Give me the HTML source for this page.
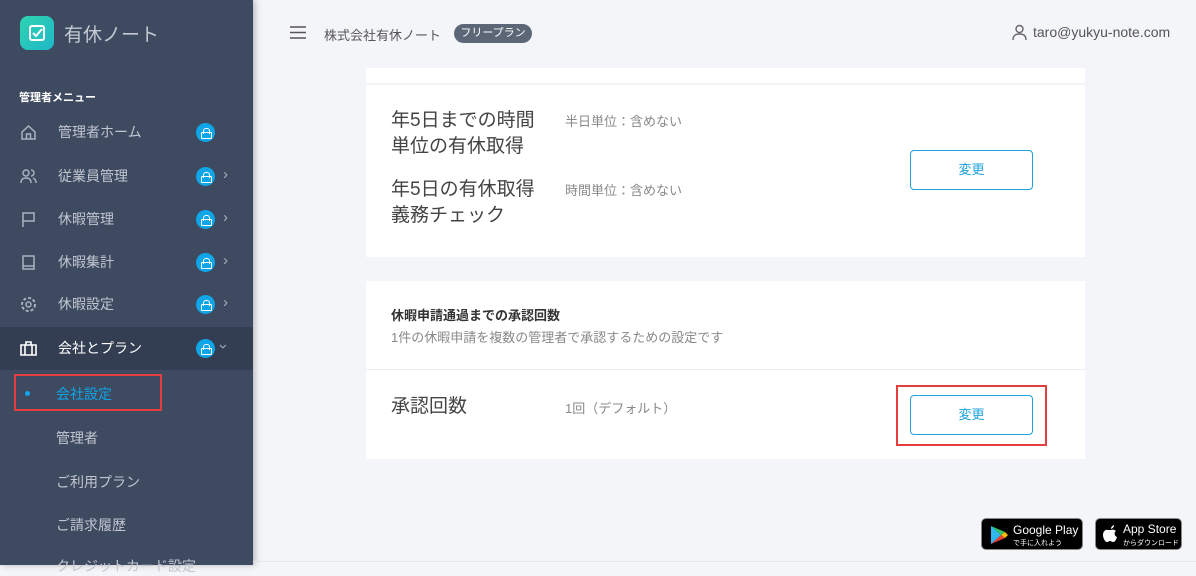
<!DOCTYPE html>
<html><head><meta charset="utf-8"><style>
*{margin:0;padding:0;box-sizing:border-box}
body{width:1196px;height:565px;overflow:hidden;background:#f4f5f8;font-family:"Liberation Sans","Noto Sans CJK JP",sans-serif;position:relative}
.sb{position:absolute;left:0;top:0;width:253px;height:565px;background:#3e4a60;box-shadow:2px 0 6px rgba(0,0,0,.25)}
.logo{position:absolute;left:20px;top:16px;width:34px;height:34px;border-radius:8px;background:linear-gradient(135deg,#2fd3b0,#1fb8c8)}
.lt{position:absolute;left:64px;top:20px;font-size:19px;color:#c3c9d3}
.sec{position:absolute;left:19px;top:89px;font-size:11px;color:#fff;font-weight:bold}
.it{position:absolute;left:0;width:253px;height:42px;color:#c0c6d0;font-size:14px}
.it .ic{position:absolute;left:20px;top:13px;width:17px;height:17px}
.it .tx{position:absolute;left:58px;top:11px}
.lk{position:absolute;left:196px;top:12px;width:19px;height:19px;border-radius:50%;background:#0ea5e9}
.lk:after{content:"";position:absolute;left:5px;top:9px;width:9px;height:5px;border:1.5px solid #fff;border-radius:1px}
.lk:before{content:"";position:absolute;left:7px;top:5px;width:5px;height:5px;border:1.5px solid #fff;border-bottom:none;border-radius:3px 3px 0 0}
.ch{position:absolute;left:223px;top:11px;color:#aab2bf;font-size:15px}
.sub{position:absolute;left:56px;font-size:14px;color:#c0c6d0}
.card{position:absolute;left:366px;width:719px;background:#fff}
.btn{position:absolute;left:910px;width:123px;height:40px;border:1px solid #1ea3dd;border-radius:4px;color:#1ea3dd;font-size:13px;text-align:center;line-height:38px;background:#fff}
.big{position:absolute;font-size:19px;color:#444;line-height:26px}
.sm{position:absolute;font-size:13px;color:#888}
</style></head><body>
<div class="sb">
<div class="logo"><svg width="34" height="34"><rect x="10" y="10" width="14" height="14" rx="2" fill="none" stroke="#fff" stroke-width="2"/><path d="M13 17l3 3 6-7" fill="none" stroke="#fff" stroke-width="2"/></svg></div>
<div class="lt">有休ノート</div>
<div class="sec">管理者メニュー</div>
<div class="it" style="top:111px"><svg class="ic" viewBox="0 0 17 17"><path d="M2 8L8.5 2 15 8V15H2Z M6.5 15V10h4v5" fill="none" stroke="#aab2bf" stroke-width="1.5"/></svg><span class="tx">管理者ホーム</span><span class="lk"></span></div>
<div class="it" style="top:155px"><svg class="ic" viewBox="0 0 17 17"><circle cx="6" cy="5" r="3" fill="none" stroke="#aab2bf" stroke-width="1.5"/><path d="M1 15c0-4 2-5 5-5s5 1 5 5M11 2a3 3 0 010 6M13 10c2 1 3 2 3 5" fill="none" stroke="#aab2bf" stroke-width="1.5"/></svg><span class="tx">従業員管理</span><span class="lk"></span><span class="ch">›</span></div>
<div class="it" style="top:198px"><svg class="ic" viewBox="0 0 17 17"><path d="M3 16V2h11v8H3" fill="none" stroke="#aab2bf" stroke-width="1.5"/></svg><span class="tx">休暇管理</span><span class="lk"></span><span class="ch">›</span></div>
<div class="it" style="top:241px"><svg class="ic" viewBox="0 0 17 17"><path d="M3 2h11v13H3zM3 12h11" fill="none" stroke="#aab2bf" stroke-width="1.5"/></svg><span class="tx">休暇集計</span><span class="lk"></span><span class="ch">›</span></div>
<div class="it" style="top:283px"><svg class="ic" viewBox="0 0 17 17"><circle cx="8.5" cy="8.5" r="2.5" fill="none" stroke="#aab2bf" stroke-width="1.5"/><circle cx="8.5" cy="8.5" r="6.5" fill="none" stroke="#aab2bf" stroke-width="2" stroke-dasharray="3 2"/></svg><span class="tx">休暇設定</span><span class="lk"></span><span class="ch">›</span></div>
<div class="it" style="top:327px;background:#333e52;height:43px;color:#fff"><svg class="ic" viewBox="0 0 17 17"><path d="M1 5h15v10H1zM6 5V2h5v3M5 5v10M12 5v10" fill="none" stroke="#fff" stroke-width="1.6"/></svg><span class="tx">会社とプラン</span><span class="lk"></span><span class="ch" style="transform:rotate(90deg);left:221px">›</span></div>
<div style="position:absolute;left:14px;top:374px;width:148px;height:37px;border:2px solid #e53e3e"></div>
<div style="position:absolute;left:25px;top:391px;width:5px;height:5px;border-radius:50%;background:#0ea5e9"></div>
<div class="sub" style="top:384px;color:#0ea5e9">会社設定</div>
<div class="sub" style="top:428px">管理者</div>
<div class="sub" style="top:472px">ご利用プラン</div>
<div class="sub" style="top:515px">ご請求履歴</div>
<div class="sub" style="top:556px">クレジットカード設定</div>
</div>
<svg style="position:absolute;left:290px;top:26px" width="16" height="13"><path d="M0 1h16M0 6.5h16M0 12h16" stroke="#555" stroke-width="1.6"/></svg>
<div style="position:absolute;left:324px;top:25px;font-size:13px;color:#555">株式会社有休ノート</div>
<div style="position:absolute;left:454px;top:24px;width:78px;height:19px;border-radius:10px;background:#5b6676;color:#fff;font-size:11px;text-align:center;line-height:19px">フリープラン</div>
<svg style="position:absolute;left:1012px;top:24px" width="15" height="16"><circle cx="7.5" cy="5" r="3.5" fill="none" stroke="#666" stroke-width="1.4"/><path d="M1 16c0-5 3-6 6.5-6s6.5 1 6.5 6" fill="none" stroke="#666" stroke-width="1.4"/></svg>
<div style="position:absolute;left:1033px;top:24px;font-size:14px;color:#555">taro@yukyu-note.com</div>
<div class="card" style="top:68px;height:15px"></div>
<div class="card" style="top:85px;height:172px"></div>
<div class="big" style="left:391px;top:108px">年5日までの時間<br>単位の有休取得</div>
<div class="sm" style="left:565px;top:111px">半日単位：含めない</div>
<div class="big" style="left:391px;top:177px">年5日の有休取得<br>義務チェック</div>
<div class="sm" style="left:565px;top:180px">時間単位：含めない</div>
<div class="btn" style="top:150px">変更</div>
<div class="card" style="top:281px;height:178px"></div>
<div style="position:absolute;left:366px;top:369px;width:719px;height:1px;background:#ebedf0"></div>
<div style="position:absolute;left:391px;top:305px;font-size:13px;color:#333;font-weight:bold">休暇申請通過までの承認回数</div>
<div class="sm" style="left:391px;top:327px;color:#888">1件の休暇申請を複数の管理者で承認するための設定です</div>
<div class="big" style="left:391px;top:394px">承認回数</div>
<div class="sm" style="left:565px;top:398px">1回（デフォルト）</div>
<div class="btn" style="top:395px">変更</div>
<div style="position:absolute;left:896px;top:385px;width:151px;height:61px;border:2px solid #e53e3e"></div>
<div style="position:absolute;left:981px;top:518px;width:102px;height:32px;background:#000;border-radius:5px;border:1px solid #888">
<svg style="position:absolute;left:8px;top:6px" width="18" height="20"><path d="M1 1l10 9-10 9z" fill="#2fb7f0"/><path d="M1 1l10 9 4-3z" fill="#34c26b"/><path d="M1 19l10-9 4 3z" fill="#ea4335"/><path d="M11 10l4-3 3 3-3 3z" fill="#fbbc05"/></svg>
<div style="position:absolute;left:31px;top:4px;color:#fff;font-size:12px">Google Play</div>
<div style="position:absolute;left:31px;top:19px;color:#fff;font-size:7px">で手に入れよう</div></div>
<div style="position:absolute;left:1095px;top:518px;width:87px;height:32px;background:#000;border-radius:5px;border:1px solid #888">
<svg style="position:absolute;left:7px;top:6px" width="16" height="19"><path d="M8 5c2-1 4 0 5 1-2 1-2 5 1 6-1 3-2 5-4 5-1 0-2-1-3-1s-2 1-3 1C2 17 0 13 0 10 0 6 3 4 5 5c1 0 2 0 3 0zM8 4c0-2 1-3 3-4 0 2-1 3-3 4z" fill="#fff"/></svg>
<div style="position:absolute;left:27px;top:3px;color:#fff;font-size:12px">App Store</div>
<div style="position:absolute;left:27px;top:19px;color:#fff;font-size:7px">からダウンロード</div></div>
<div style="position:absolute;left:253px;top:561px;width:943px;height:1px;background:#e3e5e9"></div>
</body></html>
